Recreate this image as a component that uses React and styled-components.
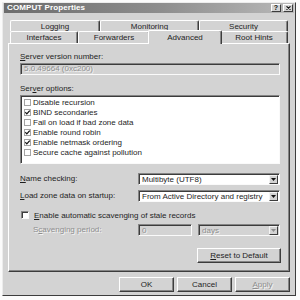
import React from 'react';
import styled, { createGlobalStyle } from 'styled-components';

const FACE = '#d3d3d3';
const DARK = '#3c3c3c';
const SHADOW = '#858585';

const Global = createGlobalStyle`
  html, body { margin: 0; padding: 0; background: #fbfbfb; }
  body {
    font-family: "Liberation Sans", Arial, sans-serif;
    font-size: 8px;
    color: #1e1e1e;
  }
`;

const Window = styled.div`
  box-sizing: border-box;
  margin: 2px 0 0 2px;
  width: 294px;
  height: 294px;
  background: ${FACE};
  border: 1px solid;
  border-color: #ececec ${DARK} ${DARK} #ececec;
  display: flex;
  flex-direction: column;
`;

const TitleBar = styled.div`
  height: 10px;
  margin: 0 1px;
  padding: 0 1px 0 3px;
  background: linear-gradient(to right, #6c6c6c, #8e8e8e 55%, #b9b9b9);
  display: flex;
  align-items: center;
`;

const Title = styled.span`
  flex: 1;
  color: #fff;
  font-weight: bold;
  font-size: 8px;
  line-height: 10px;
  letter-spacing: 0.1px;
`;

const CapButton = styled.div`
  box-sizing: border-box;
  width: 10px;
  height: 8px;
  margin-left: ${(p) => p.$gap || 0}px;
  background: ${FACE};
  border: 1px solid;
  border-color: #fff ${DARK} ${DARK} #fff;
  display: flex;
  align-items: center;
  justify-content: center;
  font-weight: bold;
  font-size: 7px;
  line-height: 6px;
  color: #111;
`;

const Body = styled.div`
  display: flex;
  flex-direction: column;
  padding: 7px 5px 0 5px;
`;

const TabStrip = styled.div`
  display: flex;
  flex-direction: column;
  padding: 0 2px;
`;

const TabRow = styled.div`
  display: flex;
  height: ${(p) => p.$h}px;
`;

const Tab = styled.div`
  box-sizing: border-box;
  flex: 0 0 ${(p) => p.$w}px;
  border-top: 1px solid #fff;
  border-left: 1px solid #fff;
  border-right: 1px solid ${DARK};
  border-radius: 2px 2px 0 0;
  box-shadow: inset -1px 0 ${SHADOW};
  background: ${FACE};
  display: flex;
  align-items: center;
  justify-content: center;
  line-height: 9px;
  ${(p) =>
    p.$active &&
    `
    position: relative;
    z-index: 1;
    margin: -1px -2px -1px -2px;
    flex-basis: ${p.$w + 4}px;
  `}
`;

const Panel = styled.div`
  box-sizing: border-box;
  height: 229px;
  border: 1px solid;
  border-color: #fff ${DARK} ${DARK} #fff;
  box-shadow: inset -1px -1px ${SHADOW};
  padding: 8px 8px 0 11px;
  display: flex;
  flex-direction: column;
`;

const Label = styled.div`
  line-height: 10px;
  height: 10px;
  margin-top: ${(p) => p.$mt || 0}px;
  padding-left: ${(p) => p.$indent || 0}px;
  white-space: nowrap;
  ${(p) => p.$disabled && `color: #8e8e8e; text-shadow: 1px 1px #f4f4f4;`}
`;

const Sunken = styled.div`
  box-sizing: border-box;
  border: 1px solid;
  border-color: ${SHADOW} #fafafa #fafafa ${SHADOW};
  box-shadow: inset 1px 1px ${DARK};
  background: ${(p) => (p.$disabled ? FACE : '#fff')};
`;

const VersionBox = styled(Sunken)`
  height: 12px;
  margin: 1px 1px 0 0;
  padding: 0 3px;
  line-height: 10px;
  color: #8e8e8e;
  text-shadow: 1px 1px #f4f4f4;
`;

const ListBox = styled(Sunken)`
  height: 69px;
  margin: 1px 1px 0 0;
  padding: 1px 2px;
  display: flex;
  flex-direction: column;
`;

const ListItem = styled.div`
  display: flex;
  align-items: center;
  height: 10px;
  gap: 2px;
  padding-left: 1px;
  white-space: nowrap;
`;

const FlatBox = styled.div`
  box-sizing: border-box;
  width: 7px;
  height: 7px;
  border: 1px solid #a4a4a4;
  background: #fff;
  display: flex;
  align-items: center;
  justify-content: center;
`;

const CheckBox3D = styled(Sunken)`
  width: 8px;
  height: 8px;
`;

const FormRow = styled.div`
  display: grid;
  grid-template-columns: ${(p) => p.$cols};
  align-items: center;
  margin-top: ${(p) => p.$mt || 0}px;
  margin-right: 1px;
`;

const Combo = styled(Sunken)`
  height: 12px;
  display: flex;
  align-items: center;
  padding: 0 1px 0 3px;
  margin-left: ${(p) => p.$ml || 0}px;
  white-space: nowrap;
  ${(p) => p.$disabled && `color: #8e8e8e; text-shadow: 1px 1px #f4f4f4;`}
`;

const ComboText = styled.span`
  flex: 1;
  overflow: hidden;
`;

const DropButton = styled.div`
  box-sizing: border-box;
  width: 9px;
  height: 9px;
  background: ${FACE};
  border: 1px solid;
  border-color: #f4f4f4 ${DARK} ${DARK} #f4f4f4;
  display: flex;
  align-items: center;
  justify-content: center;
`;

const CheckRow = styled.div`
  display: flex;
  align-items: center;
  gap: 5px;
  margin-top: ${(p) => p.$mt || 0}px;
  padding-left: 1px;
  height: 10px;
  white-space: nowrap;
`;

const Button = styled.div`
  box-sizing: border-box;
  width: ${(p) => p.$w}px;
  height: 15px;
  background: ${FACE};
  border: 1px solid;
  border-color: #fff ${DARK} ${DARK} #fff;
  box-shadow: inset -1px -1px ${SHADOW};
  display: flex;
  align-items: center;
  justify-content: center;
  ${(p) => p.$disabled && `color: #8e8e8e; text-shadow: 1px 1px #f4f4f4;`}
`;

const ResetWrap = styled.div`
  display: flex;
  justify-content: flex-end;
  margin-top: 12px;
`;

const ButtonRow = styled.div`
  display: flex;
  justify-content: flex-end;
  gap: 3px;
  margin-top: 5px;
`;

const U = styled.span`
  text-decoration: underline;
  text-underline-offset: 1px;
`;

const Check = () => (
  <svg width="5" height="5" viewBox="0 0 5 5">
    <polyline points="0.3,2.2 1.8,3.8 4.7,0.6" fill="none" stroke="#111" strokeWidth="1.2" />
  </svg>
);

const Arrow = ({ color = '#111' }) => (
  <svg width="5" height="3" viewBox="0 0 5 3">
    <polygon points="0,0 5,0 2.5,3" fill={color} />
  </svg>
);

const options = [
  ['Disable recursion', false],
  ['BIND secondaries', true],
  ['Fail on load if bad zone data', false],
  ['Enable round robin', true],
  ['Enable netmask ordering', true],
  ['Secure cache against pollution', false],
];

export default function App() {
  return (
    <>
      <Global />
      <Window>
        <TitleBar>
          <Title>COMPUT Properties</Title>
          <CapButton>?</CapButton>
          <CapButton $gap={2}>
            <svg width="5" height="4" viewBox="0 0 5 4">
              <path d="M0.5 0.3 L4.5 3.7 M4.5 0.3 L0.5 3.7" stroke="#111" strokeWidth="1.1" />
            </svg>
          </CapButton>
        </TitleBar>
        <Body>
          <TabStrip>
            <TabRow $h={11}>
              <Tab $w={90}>Logging</Tab>
              <Tab $w={99}>Monitoring</Tab>
              <Tab $w={89}>Security</Tab>
            </TabRow>
            <TabRow $h={12}>
              <Tab $w={68}>Interfaces</Tab>
              <Tab $w={72}>Forwarders</Tab>
              <Tab $w={70} $active>Advanced</Tab>
              <Tab $w={68}>Root Hints</Tab>
            </TabRow>
          </TabStrip>
          <Panel>
            <Label>
              <U>S</U>erver version number:
            </Label>
            <VersionBox $disabled>5.0.49664 (0xc200)</VersionBox>
            <Label $mt={9}>
              Ser<U>v</U>er options:
            </Label>
            <ListBox>
              {options.map(([text, on]) => (
                <ListItem key={text}>
                  <FlatBox>{on && <Check />}</FlatBox>
                  {text}
                </ListItem>
              ))}
            </ListBox>
            <FormRow $cols="118px 1fr" $mt={9}>
              <Label>
                <U>N</U>ame checking:
              </Label>
              <Combo>
                <ComboText>Multibyte (UTF8)</ComboText>
                <DropButton>
                  <Arrow />
                </DropButton>
              </Combo>
            </FormRow>
            <FormRow $cols="118px 1fr" $mt={5}>
              <Label>
                <U>L</U>oad zone data on startup:
              </Label>
              <Combo>
                <ComboText>From Active Directory and registry</ComboText>
                <DropButton>
                  <Arrow />
                </DropButton>
              </Combo>
            </FormRow>
            <CheckRow $mt={8}>
              <CheckBox3D />
              <span>
                <U>E</U>nable automatic scavenging of stale records
              </span>
            </CheckRow>
            <FormRow $cols="118px 54px 1fr" $mt={4}>
              <Label $indent={13} $disabled>
                S<U>c</U>avenging period:
              </Label>
              <Combo $disabled>
                <ComboText>0</ComboText>
              </Combo>
              <Combo $disabled $ml={6}>
                <ComboText>days</ComboText>
                <DropButton>
                  <Arrow color="#8e8e8e" />
                </DropButton>
              </Combo>
            </FormRow>
            <ResetWrap>
              <Button $w={84}>
                <span>
                  <U>R</U>eset to Default
                </span>
              </Button>
            </ResetWrap>
          </Panel>
          <ButtonRow>
            <Button $w={55}>OK</Button>
            <Button $w={55}>Cancel</Button>
            <Button $w={55} $disabled>
              <U>A</U>pply
            </Button>
          </ButtonRow>
        </Body>
      </Window>
    </>
  );
}
